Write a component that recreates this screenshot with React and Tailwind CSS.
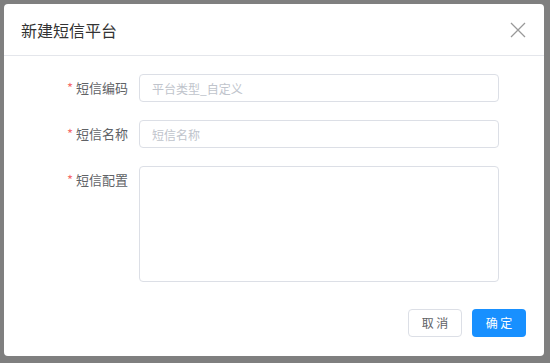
import React from 'react';

const fields = [
  { label: '短信编码', placeholder: '平台类型_自定义' },
  { label: '短信名称', placeholder: '短信名称' },
];

const App = () => {
  return (
    <div
      className="w-[550px] h-[363px] bg-[#7f7f7f] pt-[4px] pl-[4px]"
      style={{ fontFamily: '"Noto Sans CJK SC", "Noto Sans", sans-serif' }}
    >
      <div className="w-[540px] h-[352px] bg-white rounded-[4px] flex flex-col">
        {/* header */}
        <div className="h-[52px] border-b border-[#e4e6eb] flex items-center justify-between pl-[17px] pr-[18px]">
          <span className="text-[16px] text-[#333] leading-none">新建短信平台</span>
          <svg width="16" height="16" viewBox="0 0 16 16" className="text-[#999]">
            <path d="M1 1L15 15M15 1L1 15" stroke="currentColor" strokeWidth="1.3" fill="none" />
          </svg>
        </div>

        {/* body */}
        <div className="flex flex-col gap-[18px] pt-[18px]">
          {fields.map((f) => (
            <div key={f.label} className="flex items-center">
              <label className="w-[124px] text-right text-[13px] text-[#606266] pr-0">
                <span className="text-[#f56c6c] mr-[3px]">*</span>
                {f.label}
              </label>
              <input
                placeholder={f.placeholder}
                className="ml-[11px] w-[360px] h-[28px] border border-[#dcdfe6] rounded-[4px] px-[12px] text-[12px] text-[#606266] placeholder:text-[#c0c4cc] outline-none"
              />
            </div>
          ))}
          <div className="flex items-start">
            <label className="w-[124px] text-right text-[13px] text-[#606266] pt-[4px]">
              <span className="text-[#f56c6c] mr-[3px]">*</span>
              短信配置
            </label>
            <textarea className="ml-[11px] w-[360px] h-[116px] border border-[#dcdfe6] rounded-[4px] px-[12px] py-[6px] text-[12px] outline-none resize-none" />
          </div>
        </div>

        {/* footer */}
        <div className="flex justify-end gap-[10px] pr-[18px] pt-[27px]">
          <button className="w-[54px] h-[28px] border border-[#dcdfe6] rounded-[4px] bg-white text-[12px] text-[#606266]">
            取 消
          </button>
          <button className="w-[54px] h-[28px] rounded-[4px] bg-[#1890ff] text-[12px] text-white">
            确 定
          </button>
        </div>
      </div>
    </div>
  );
};

export default App;
